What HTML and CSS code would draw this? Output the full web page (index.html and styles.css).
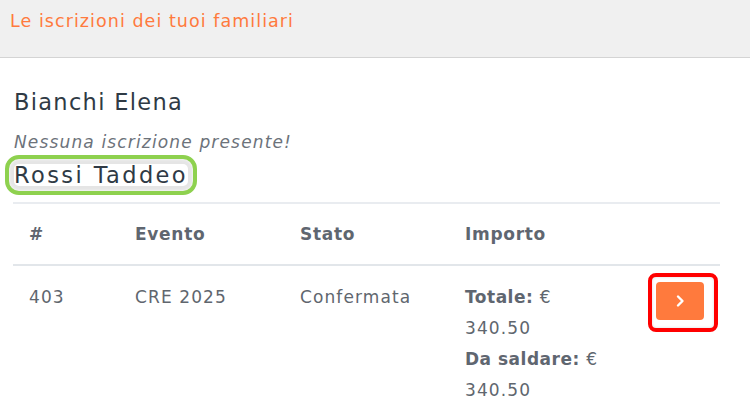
FILE: index.html
```html
<!DOCTYPE html>
<html lang="it">
<head>
<meta charset="utf-8">
<title>Le iscrizioni dei tuoi familiari</title>
<link rel="stylesheet" href="styles.css">
</head>
<body>
<header class="topbar">
  <h1 class="topbar-title">Le iscrizioni dei tuoi familiari</h1>
</header>
<main class="content">
  <section class="member">
    <h3 class="member-name">Bianchi Elena</h3>
    <p class="empty-note">Nessuna iscrizione presente!</p>
  </section>
  <section class="member">
    <h3 class="member-name highlighted">Rossi Taddeo</h3>
    <table class="reg-table">
      <thead>
        <tr>
          <th class="col-id">#</th>
          <th class="col-event">Evento</th>
          <th class="col-state">Stato</th>
          <th class="col-amount">Importo</th>
          <th class="col-action"></th>
        </tr>
      </thead>
      <tbody>
        <tr>
          <td>403</td>
          <td>CRE 2025</td>
          <td>Confermata</td>
          <td><strong>Totale:</strong> €<br>340.50<br><strong>Da saldare:</strong> €<br>340.50</td>
          <td class="action-cell">
            <span class="btn-highlight">
              <button class="btn-go" type="button" aria-label="Dettagli">
                <svg width="12" height="14" viewBox="0 0 12 14"><path d="M4 2.5 L8.5 7 L4 11.5" fill="none" stroke="#fff" stroke-width="2.4" stroke-linecap="round" stroke-linejoin="round"/></svg>
              </button>
            </span>
          </td>
        </tr>
      </tbody>
    </table>
  </section>
</main>
</body>
</html>
```
FILE: styles.css
```css
* { box-sizing: border-box; }
html, body { margin: 0; padding: 0; background: #fff; }
body {
  font-family: "DejaVu Sans", "Noto Sans", sans-serif;
  color: #60666e;
  width: 750px;
  height: 420px;
  overflow: hidden;
}
.topbar {
  height: 58px;
  background: #f0f0f0;
  border-bottom: 1px solid #d4d4d4;
  padding: 9px 10px 0;
}
.topbar-title {
  margin: 0;
  font-size: 17.5px;
  font-weight: normal;
  line-height: 24px;
  letter-spacing: 1.05px;
  color: #ff7a3d;
}
.content {
  padding: 0 30px 0 13px;
}
.member-name {
  margin: 33px 0 0 1px;
  font-size: 22.5px;
  font-weight: normal;
  line-height: 22px;
  letter-spacing: 1.3px;
  color: #2f3a45;
}
.empty-note {
  margin: 17px 0 0 1px;
  font-size: 17px;
  font-style: italic;
  line-height: 24px;
  letter-spacing: 1.15px;
  color: #6c727a;
}
.member-name.highlighted {
  display: table;
  margin-top: 10px;
  letter-spacing: 2.4px;
  border-radius: 5px;
  outline: 4px solid #8ed14f;
  outline-offset: 5px;
  box-shadow: 0 0 3px 5px rgba(0,0,0,0.10);
}
.reg-table {
  margin-top: 16px;
  width: 707px;
  border-collapse: collapse;
  font-size: 17px;
  letter-spacing: 1.1px;
  table-layout: fixed;
}
.reg-table th {
  text-align: left;
  font-weight: bold;
  color: #5f6670;
  line-height: 24px;
  letter-spacing: 0.7px;
  padding: 18px 16px;
  border-top: 2px solid #e9ecf0;
  border-bottom: 2px solid #e2e6ea;
}
.col-id { width: 106px; }
.col-event { width: 165px; }
.col-state { width: 165px; }
.col-amount { width: 191px; }
.col-action { width: 80px; }
.reg-table td {
  vertical-align: top;
  line-height: 31px;
  padding: 16px 16px 10px;
  color: #60666e;
  white-space: nowrap;
}
.reg-table td strong { color: #5f6670; letter-spacing: 0.5px; }
.reg-table td.action-cell {
  padding: 11px 0 0 12px;
  line-height: 0;
}
.btn-highlight {
  display: inline-block;
  padding: 5px 10px 8px 4px;
  border-radius: 4px;
  outline: 4px solid #ff0000;
  box-shadow: inset 0 0 3px rgba(0,0,0,0.15);
}
.btn-go {
  display: flex;
  align-items: center;
  justify-content: center;
  width: 48px;
  height: 38px;
  padding: 0;
  border: none;
  border-radius: 4px;
  background: #ff7a3d;
}
```
